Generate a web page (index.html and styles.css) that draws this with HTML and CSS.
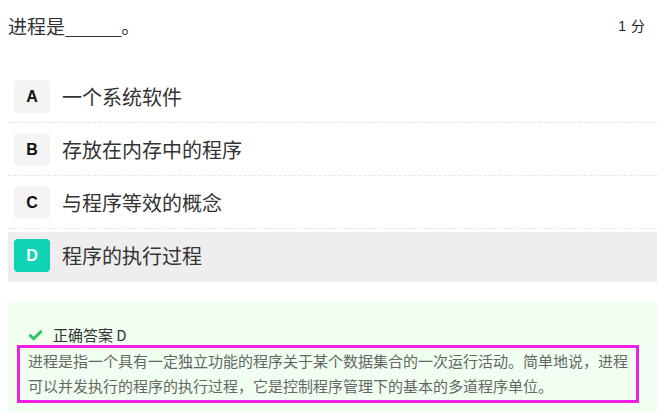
FILE: index.html
```html
<!DOCTYPE html>
<html lang="zh">
<head>
<meta charset="utf-8">
<link rel="stylesheet" href="styles.css">
</head>
<body>
<div class="page">
  <div class="header">
    <div class="title">进程是<span class="blank">______</span>。</div>
    <div class="score"><span class="num">1</span>分</div>
  </div>
  <div class="options">
    <div class="option"><span class="badge">A</span><span class="otext">一个系统软件</span></div>
    <div class="option"><span class="badge">B</span><span class="otext">存放在内存中的程序</span></div>
    <div class="option"><span class="badge">C</span><span class="otext">与程序等效的概念</span></div>
    <div class="option selected"><span class="badge">D</span><span class="otext">程序的执行过程</span></div>
  </div>
  <div class="answer">
    <div class="answer-head">
      <svg class="check" width="13" height="11" viewBox="0 0 13 11"><path d="M1.3 5.6 L4.8 8.8 L11.8 1.6" fill="none" stroke="#2ec866" stroke-width="3" stroke-linecap="round" stroke-linejoin="round"/></svg>
      <span>正确答案 D</span>
    </div>
    <div class="explain">进程是指一个具有一定独立功能的程序关于某个数据集合的一次运行活动。简单地说，进程可以并发执行的程序的执行过程，它是控制程序管理下的基本的多道程序单位。</div>
  </div>
</div>
</body>
</html>
```
FILE: styles.css
```css
html, body {
  margin: 0;
  padding: 0;
  background: #fff;
}
body {
  font-family: "Noto Sans CJK SC", "Liberation Sans", sans-serif;
  color: #333;
}
.page {
  width: 649px;
  margin-left: 8px;
}
.header {
  display: flex;
  justify-content: space-between;
  align-items: flex-start;
  height: 70px;
}
.title {
  font-size: 19px;
  line-height: 26px;
  margin-top: 13px;
  color: #333;
}
.blank {
  letter-spacing: -1.4px;
  margin-right: 1px;
}
.score {
  font-size: 14px;
  line-height: 20px;
  margin-top: 15px;
  margin-right: 12px;
  color: #222;
}
.num {
  font-family: "Liberation Sans", sans-serif;
  margin-right: 5px;
}
.option {
  display: flex;
  align-items: center;
  padding: 10px 6px 9px;
  border-bottom: 1px dashed #e6e6e6;
}
.badge {
  width: 36px;
  height: 33px;
  border-radius: 4px;
  background: #f4f4f4;
  display: flex;
  align-items: center;
  justify-content: center;
  font-family: "Liberation Sans", sans-serif;
  font-weight: bold;
  font-size: 16px;
  color: #111;
  flex-shrink: 0;
}
.otext {
  margin-left: 12px;
  font-size: 20px;
  color: #333;
}
.option.selected {
  border-bottom: none;
  background: #eeeeee;
  margin-top: 3px;
  padding: 7px 6px 10px;
}
.option.selected .badge {
  background: #10d2b4;
  color: #fff;
}
.answer {
  margin-top: 20px;
  background: #f0fff0;
  padding: 23px 18px 9px 9px;
}
.answer-head {
  display: flex;
  align-items: center;
  font-size: 15px;
  line-height: 20px;
  color: #333;
  padding-left: 12px;
}
.check {
  margin-right: 11px;
}
.explain {
  border: 3px solid #f01ee8;
  padding: 0 5px 2px 8px;
  font-size: 15px;
  line-height: 25px;
  color: #666;
}
```
